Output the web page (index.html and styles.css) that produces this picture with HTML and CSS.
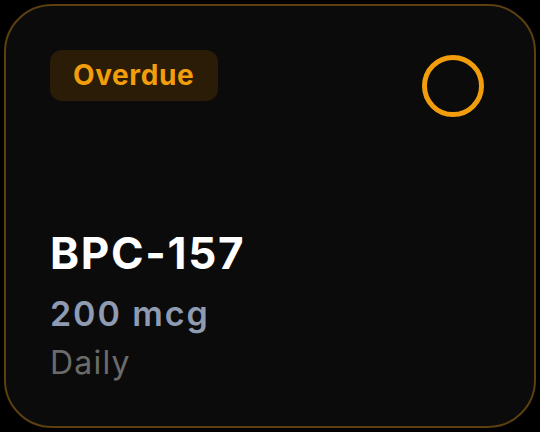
FILE: index.html
```html
<!DOCTYPE html>
<html lang="en">
<head>
    <meta charset="UTF-8">
    <title>Dose Card</title>
    <link rel="stylesheet" href="styles.css">
</head>
<body>
    <div class="card">
        <div class="card-top">
            <span class="badge">Overdue</span>
            <span class="check"></span>
        </div>
        <div class="card-info">
            <div class="name">BPC-157</div>
            <div class="dose">200 mcg</div>
            <div class="freq">Daily</div>
        </div>
    </div>
</body>
</html>
```

FILE: styles.css
```css
body {
    margin: 0;
    padding: 4px;
    background-color: #000;
    font-family: Inter, "Noto Sans", sans-serif;
}

.card {
    box-sizing: border-box;
    height: 424px;
    background-color: #0b0b0b;
    border: 2px solid #5c400f;
    border-radius: 48px;
    padding: 44px 50px 0 44px;
    display: flex;
    flex-direction: column;
}

.card-top {
    display: flex;
    justify-content: space-between;
    align-items: flex-start;
}

.badge {
    background-color: #2a1c07;
    color: #f29e0c;
    font-size: 28px;
    font-weight: 700;
    line-height: 34px;
    padding: 8px 24px 9px 23px;
    border-radius: 12px;
    letter-spacing: 0.6px;
}

.check {
    width: 52px;
    height: 52px;
    margin-top: 5px;
    border: 5px solid #f29e0c;
    border-radius: 50%;
}

.card-info {
    margin-top: 110px;
}

.name {
    color: #fff;
    font-size: 44px;
    font-weight: 700;
    line-height: 52px;
    letter-spacing: 1.7px;
}

.dose {
    color: #8e9bb2;
    font-size: 34px;
    font-weight: 600;
    line-height: 40px;
    letter-spacing: 1.9px;
    margin-top: 14.5px;
}

.freq {
    color: #6b6b6b;
    font-size: 32px;
    line-height: 38px;
    letter-spacing: 1.2px;
    margin-top: 10px;
}
```
